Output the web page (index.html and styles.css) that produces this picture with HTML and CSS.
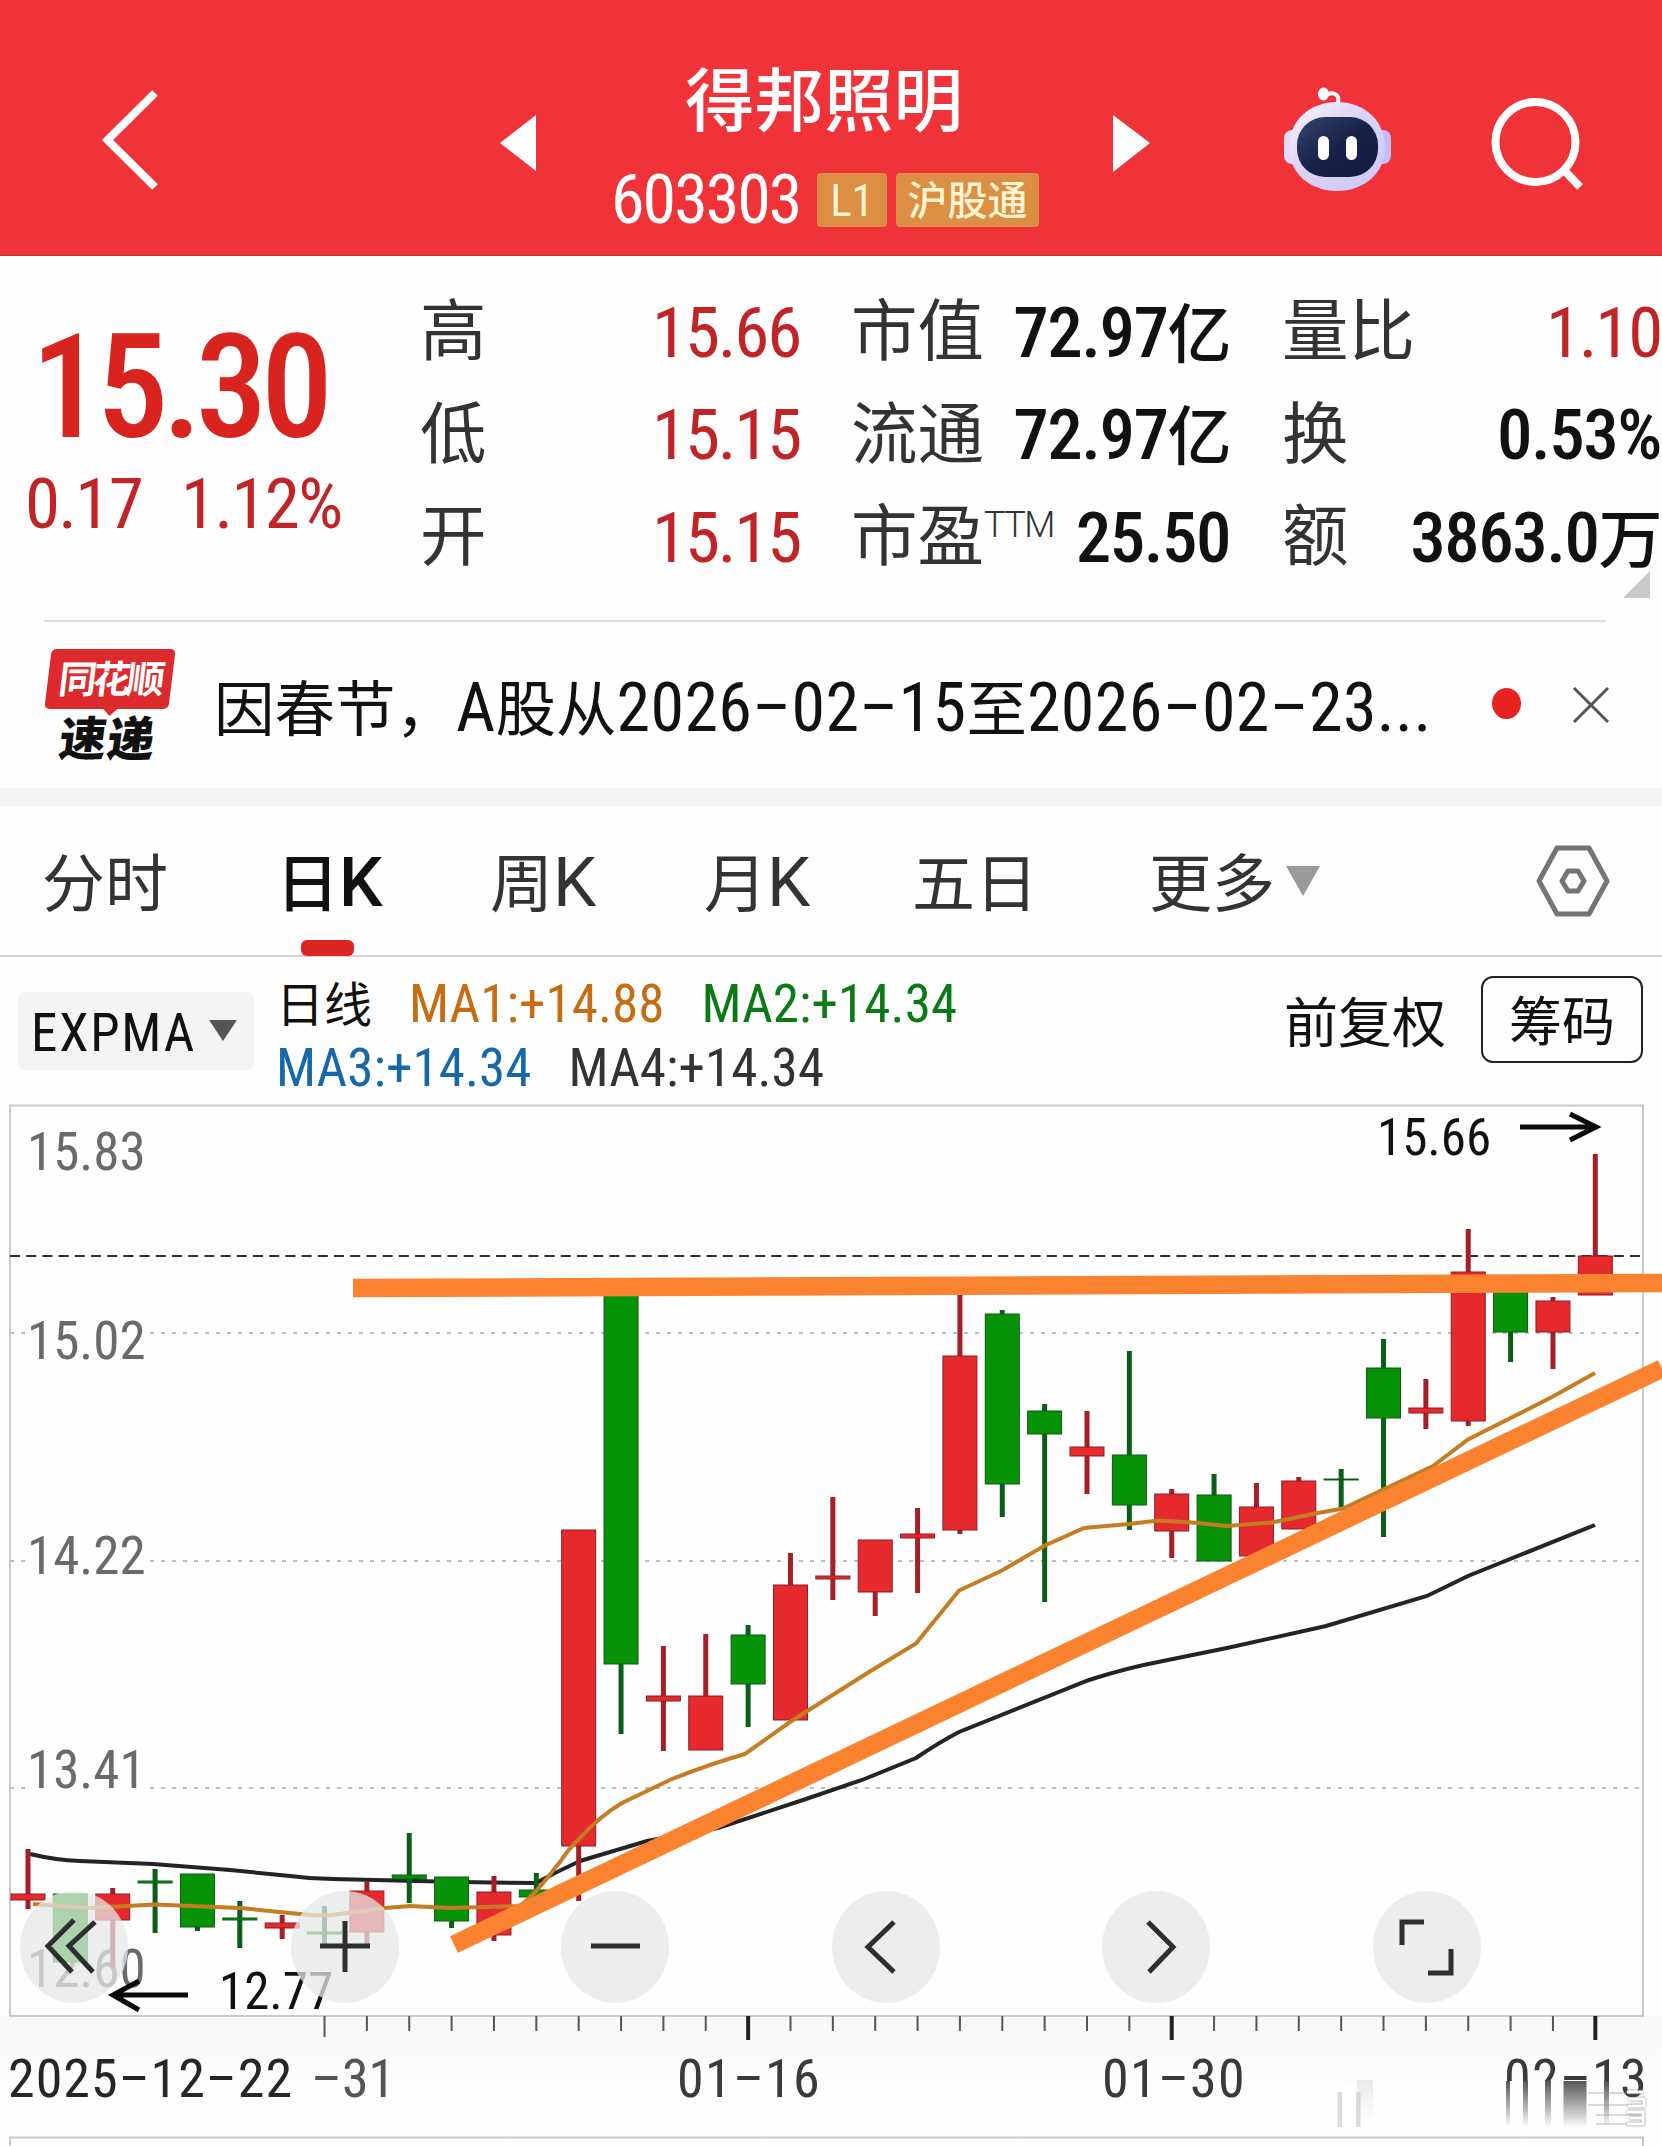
FILE: index.html
```html
<!DOCTYPE html>
<html lang="zh">
  <head>
    <meta charset="UTF-8" />
    <meta name="viewport" content="width=device-width, initial-scale=1.0" />
    <title>得邦照明 603303</title>
    <link rel="stylesheet" href="styles.css">
  </head>
  <body>
    <header class="cabecera">
      <svg class="volver" viewBox="98 86 64 110"><path d="M155 93 L107.500 140 L155 187" /></svg>
      <svg class="anterior" viewBox="500 115 37 57"><path d="M500 143 L536 115 V171 Z" /></svg>
      <div class="titulo">
        <h1>得邦照明</h1>
        <div class="codigo">
          <span class="num">603303</span>
          <span class="etiqueta nivel">L1</span>
          <span class="etiqueta">沪股通</span>
        </div>
      </div>
      <svg class="siguiente" viewBox="1113 115 37 57"><path d="M1113 115 L1150 143 L1113 172 Z" /></svg>
      <svg class="robot" viewBox="1280 84 115 112">
        <defs>
          <linearGradient id="casco" x1="0" y1="0" x2="1" y2="1">
            <stop offset="0" stop-color="#fbf4fb" />
            <stop offset=".45" stop-color="#ddd3f6" />
            <stop offset="1" stop-color="#c9c8f7" />
          </linearGradient>
          <linearGradient id="visor" x1="0" y1="0" x2="1" y2="1">
            <stop offset="0" stop-color="#34436e" />
            <stop offset=".5" stop-color="#17224a" />
            <stop offset="1" stop-color="#131c40" />
          </linearGradient>
        </defs>
        <path d="M1338 103 C1340 94 1333 91 1326 95" fill="none" stroke="#fff" stroke-width="4" />
        <ellipse cx="1323.500" cy="94" rx="5.500" ry="6.500" fill="#fff" />
        <rect x="1284" y="130" width="16" height="34" rx="8" fill="#e2dbfb" />
        <rect x="1375" y="130" width="16" height="34" rx="8" fill="#c3bff3" />
        <path d="M1337 102 C1365 102 1385 121 1385 148 C1385 173 1364 191 1337 191 C1310 191 1289 173 1289 148 C1289 121 1309 102 1337 102 Z" fill="url(#casco)" />
        <rect x="1297" y="117" width="81" height="60" rx="28" fill="url(#visor)" />
        <rect x="1318" y="136" width="11" height="24" rx="5.500" fill="#fff" />
        <rect x="1346" y="136" width="11" height="24" rx="5.500" fill="#fff" />
      </svg>
      <svg class="buscar" viewBox="1488 92 102 102">
        <circle cx="1535.500" cy="142" r="40" />
        <path d="M1563 169 L1580 187" />
      </svg>
    </header>

    <section class="cotizacion">
      <div class="precio">
        <strong class="num">15.30</strong>
        <div class="cambio num"><span>0.17</span><span>1.12%</span></div>
      </div>
      <dl class="datos datos1">
        <div><dt>高</dt><dd class="num rojo">15.66</dd></div>
        <div><dt>低</dt><dd class="num rojo">15.15</dd></div>
        <div><dt>开</dt><dd class="num rojo">15.15</dd></div>
      </dl>
      <dl class="datos datos2">
        <div><dt>市值</dt><dd class="num">72.97<span>亿</span></dd></div>
        <div><dt>流通</dt><dd class="num">72.97<span>亿</span></dd></div>
        <div><dt>市盈<sup>TTM</sup></dt><dd class="num">25.50</dd></div>
      </dl>
      <dl class="datos datos3">
        <div><dt>量比</dt><dd class="num rojo">1.10</dd></div>
        <div><dt>换</dt><dd class="num">0.53%</dd></div>
        <div><dt>额</dt><dd class="num">3863.0<span>万</span></dd></div>
      </dl>
      <i class="esquina"></i>
    </section>

    <section class="aviso">
      <div class="logo">
        <span class="logo-rojo"><b>同花顺</b></span>
        <span class="logo-negro">速递</span>
      </div>
      <p>因春节，<span class="num">A</span>股从<span class="num">2026–02–15</span>至<span class="num">2026–02–23...</span></p>
      <i class="punto"></i>
      <svg class="cerrar" viewBox="0 0 40 40"><path d="M3 3 L37 37 M37 3 L3 37" /></svg>
    </section>

    <nav class="pestanas">
      <a>分时</a>
      <a class="activa">日<span>K</span></a>
      <a>周<span>K</span></a>
      <a>月<span>K</span></a>
      <a>五日</a>
      <a class="mas">更多<svg viewBox="0 0 34 30"><path d="M0 0 H34 L17 30 Z" /></svg></a>
      <svg class="ajustes" viewBox="0 0 76 74">
        <path d="M22 4 H54 L72 37 L54 70 H22 L4 37 Z" />
        <path d="M33 27 H43 L49 37 L43 47 H33 L27 37 Z" />
      </svg>
    </nav>

    <section class="indicadores">
      <div class="selector">EXPMA<svg viewBox="0 0 28 21"><path d="M0 0 H28 L14 21 Z" /></svg></div>
      <div class="medias">
        <div><span class="linea">日线</span><span class="ma1">MA1:+14.88</span><span class="ma2">MA2:+14.34</span></div>
        <div><span class="ma3">MA3:+14.34</span><span class="ma4">MA4:+14.34</span></div>
      </div>
      <span class="ajuste">前复权</span>
      <span class="boton">筹码</span>
    </section>

    <section class="grafico">
      <svg class="lienzo" viewBox="0 1090 1662 1056">
        <defs>
          <linearGradient id="pie" x1="0" y1="0" x2="0" y2="1">
            <stop offset="0" stop-color="#f7f8f8" />
            <stop offset=".5" stop-color="#fcfdfd" />
            <stop offset="1" stop-color="#fdfefe" />
          </linearGradient>
          <linearGradient id="estela" x1="0" y1="0" x2="0" y2="1">
            <stop offset="0" stop-color="#555" />
            <stop offset="1" stop-color="#555" stop-opacity="0" />
          </linearGradient>
        </defs>
        <rect x="0" y="2016" width="1662" height="121" fill="url(#pie)" />
        <rect class="marco" x="10" y="1105.500" width="1633" height="910.500" />
        <path class="marco" d="M10 2146 V2137.500 H1643 V2146" />

        <!-- Niveles de precio -->
        <path class="nivel-precio" d="M10 1333 H32 M150 1333 H1643 M10 1561 H32 M150 1561 H1643 M10 1788 H32 M150 1788 H1643" />
        <path class="actual" d="M10 1256 H1640" />
        <g class="eje">
          <text x="27" y="1170">15.83</text>
          <text x="27" y="1359">15.02</text>
          <text x="27" y="1574">14.22</text>
          <text x="27" y="1788">13.41</text>
          <text x="27" y="1987">12.60</text>
        </g>

        <path class="negra" d="M30 1854 Q55 1860 80 1861 L153 1864 L230 1870 L290 1876 Q312 1879 333 1879 L459 1882 L536 1883 Q558 1871 580 1861 L647 1841 L718 1828 L806 1799 L862 1780 L916 1758 Q938 1743 959 1732 L1089 1680 Q1126 1668 1163 1661 L1227 1648 L1326 1626 L1427 1596 L1468 1576 L1595 1525" />
        <g id="velas"></g>
        <path class="naranja" d="M33 1904 L89 1908 L155 1904.500 L240 1908 L300 1914 Q325 1917 340 1914 L385 1908 L410 1906 L450 1908 L520 1906 C540 1890 548 1876 560 1862 Q570 1847 580 1838 Q600 1816 622 1803 L672 1779 Q710 1764 745 1754 L790 1722 L869 1672 L916 1643.500 L959 1590.500 L1001 1571 L1044 1546 L1084 1528 L1129 1524 L1158 1520.500 L1192 1522.500 L1227 1526 L1272 1522.500 L1315 1513.500 L1343 1508.500 L1433 1466 L1468 1439.500 L1552 1397 L1595 1373" />

        <!-- Tendencias dibujadas a mano -->
        <path class="tendencia" d="M353 1288 L1662 1283" />
        <path class="tendencia" d="M454 1944.500 L1662 1368.500" />

        <text class="extremo" x="1377" y="1155">15.66</text>
        <path class="flecha" d="M1520 1127 H1596 M1570 1114 L1596 1127 L1570 1140" />
        <text class="extremo" x="219" y="2009">12.77</text>
        <path class="flecha" d="M188 1995 H113 M139 1981 L113 1995 L139 2010" />

        <g id="marcas"></g>
        <g class="fechas">
          <text class="primera" x="8" y="2097">2025–12–22</text>
          <text class="tapada" x="311" y="2097">–31</text>
          <text x="677" y="2097">01–16</text>
          <text x="1102" y="2097">01–30</text>
          <text x="1504" y="2097">02–13</text>
        </g>

        <!-- Restos de la marca de agua -->
        <rect x="1498" y="2081" width="120" height="50" fill="#fcfdfd" />
        <g fill="url(#estela)">
          <rect x="1506" y="2081" width="4" height="46" />
          <rect x="1523" y="2081" width="5" height="46" />
          <rect x="1545" y="2081" width="6" height="46" />
          <rect x="1563.500" y="2081" width="23" height="46" />
          <rect x="1604" y="2081" width="5" height="46" />
          <rect x="1357" y="2080" width="16" height="40" opacity=".12" />
        </g>
        <path d="M1340 2127 V2092 M1358 2127 V2092" stroke="#bbb" stroke-opacity=".5" stroke-width="5" />
        <rect x="1342" y="2084" width="14" height="44" fill="#fff" />
        <path d="M1588 2093 H1640 M1588 2105 H1640 M1596 2115 H1640 M1596 2124 H1636" stroke="#999" stroke-opacity=".35" stroke-width="2" />
        <path class="sello" d="M1627 2092 H1643 M1629 2099 H1644 V2106 H1628 M1627 2112 H1643 V2124 H1627 M1630 2118 H1642" />
      </svg>

      <div class="botones">
        <button><svg viewBox="0 0 108 112"><path d="M54 29 L28 55 L52 81 M75 31 L49 55 L73 81" /></svg></button>
        <button><svg viewBox="0 0 108 112"><path d="M29 55 H79 M54 30 V81" /></svg></button>
        <button><svg viewBox="0 0 108 112"><path d="M30 55 H79" /></svg></button>
        <button><svg viewBox="0 0 108 112"><path d="M62 31 L36 56 L62 81" /></svg></button>
        <button><svg viewBox="0 0 108 112"><path d="M46 31 L71 56 L47 81" /></svg></button>
        <button><svg viewBox="0 0 108 112"><path d="M29 54 V31 H51 M78 58 V82 H55" /></svg></button>
      </div>
    </section>
    <script src="velas.js"></script>
  </body>
</html>
```
FILE: styles.css
```css
* {
  box-sizing: border-box;
}
body {
  margin: 0;
  width: 1662px;
  height: 2146px;
  overflow: hidden;
  background-color: #fefefe;
  color: #111;
  font-family: "Noto Sans CJK SC", sans-serif;
}
svg {
  display: block;
}
/* Las cifras van siempre en una fuente estrecha */
.num {
  font-family: "Roboto Condensed", Roboto, sans-serif;
}
.rojo {
  color: #c12426;
}

/* Cabecera roja */
.cabecera {
  display: flex;
  align-items: flex-start;
  height: 256px;
  background-color: #f03239;
  border-bottom: 1px solid #b5393d;
  color: white;
}
.cabecera svg {
  flex: none;
}
.volver {
  width: 64px;
  height: 110px;
  margin: 86px 0 0 98px;
}
.volver path,
.buscar circle,
.buscar path {
  fill: none;
  stroke: white;
  stroke-width: 8px;
}
.anterior,
.siguiente {
  width: 37px;
  height: 57px;
  margin-top: 115px;
  fill: white;
}
.anterior {
  margin-left: 338px;
}
.siguiente {
  margin-left: 73px;
}
.titulo {
  width: 430px;
  margin: 56px 0 0 73px;
}
.titulo h1 {
  margin: 0 0 37px;
  padding-right: 2px;
  font-size: 69.5px;
  line-height: 80px;
  font-weight: 500;
  text-align: center;
}
.codigo {
  display: flex;
  align-items: center;
  height: 54px;
}
.codigo .num {
  width: 207px;
  padding-left: 1px;
  font-size: 68px;
  font-weight: 450;
  letter-spacing: -2px;
}
.etiqueta {
  width: 143px;
  height: 54px;
  border-radius: 4px;
  background-color: #dc8e42;
  color: #fff4d2;
  font-size: 40px;
  font-weight: 500;
  line-height: 50px;
  text-align: center;
}
.etiqueta.nivel {
  width: 70px;
  margin-right: 9px;
  font-family: "Roboto Condensed", Roboto, sans-serif;
  font-size: 45px;
  font-weight: 400;
  line-height: 55px;
}
.robot {
  width: 115px;
  height: 112px;
  margin: 84px 0 0 130px;
}
.buscar {
  width: 102px;
  height: 102px;
  margin: 92px 0 0 93px;
}

/* Precio y datos del día */
.cotizacion {
  position: relative;
  display: flex;
  height: 366px;
  padding-top: 23px;
}
.cotizacion::after {
  content: "";
  position: absolute;
  left: 44px;
  right: 56px;
  bottom: 0;
  border-bottom: 2px solid #dfdfdf;
}
.precio {
  width: 422px;
  padding: 39px 0 0 31px;
  color: #d8231f;
}
.precio strong {
  display: block;
  font-size: 144px;
  line-height: 140px;
  font-weight: 500;
  letter-spacing: -6.5px;
}
.cambio {
  display: flex;
  gap: 39px;
  margin: 4px 0 0 -6px;
  font-size: 71px;
  line-height: 84px;
  font-weight: 450;
  letter-spacing: -1.7px;
  color: #c12426;
}
.datos {
  margin: 0;
}
.datos1 {
  width: 378px;
}
.datos2 {
  width: 377px;
  margin-left: 53px;
}
.datos3 {
  width: 377px;
  margin-left: 54px;
}
.datos div {
  display: flex;
  justify-content: space-between;
  align-items: center;
  height: 102.5px;
  white-space: nowrap;
}
.datos dt {
  margin: -8px 0 0 -2px;
  font-size: 66.5px;
  line-height: 90px;
  color: #333;
}
.datos dd {
  margin: 5px 0 0;
  font-size: 71px;
  line-height: 80px;
  letter-spacing: -1.5px;
  font-weight: 500;
}
.datos dd.rojo {
  font-weight: 450;
  letter-spacing: -2.2px;
}
.datos dd span {
  font-family: "Noto Sans CJK SC", sans-serif;
  font-size: 64px;
  line-height: 1;
  font-weight: 500;
}
.datos sup {
  font-family: Roboto, sans-serif;
  font-size: 36px;
  font-weight: 300;
  line-height: 0;
  letter-spacing: -1.5px;
  vertical-align: 23px;
}
.esquina {
  position: absolute;
  right: 12px;
  top: 315px;
  border-left: 27px solid transparent;
  border-bottom: 27px solid #c9c9c9;
}

/* Aviso */
.aviso {
  display: flex;
  align-items: center;
  height: 184px;
  border-bottom: 18px solid #f2f4f5;
}
.logo {
  width: 124px;
  margin: 0 42px 0 48px;
  padding-top: 2px;
  font-weight: 900;
  line-height: 1;
}
.logo span {
  display: block;
}
.logo-rojo {
  position: relative;
  height: 60px;
  border-radius: 5px;
  background-color: #dc2a2d;
  color: white;
  font-size: 38px;
  line-height: 56px;
  text-align: center;
  transform: skewX(-7deg);
}
.logo-rojo b {
  display: inline-block;
  font-weight: 700;
  letter-spacing: -4px;
}
.logo-rojo::after {
  content: "";
  position: absolute;
  left: 58px;
  top: 59px;
  border: 8px solid transparent;
  border-top-color: #dc2a2d;
  border-bottom: 0;
}
.logo-negro {
  padding-left: 12px;
  font-size: 47px;
  line-height: 54px;
  letter-spacing: 1px;
  transform: skewX(-7deg);
}
.aviso p {
  width: 1278px;
  margin: 0;
  font-size: 60.5px;
  line-height: 90px;
  white-space: nowrap;
}
.aviso p .num {
  font-size: 68px;
  line-height: 1;
  letter-spacing: 0.35px;
}
.punto {
  width: 29px;
  height: 31px;
  margin-top: -3px;
  border-radius: 50%;
  background-color: #e8221e;
}
.cerrar {
  width: 40px;
  height: 40px;
  margin-left: 50px;
  fill: none;
  stroke: #555;
  stroke-width: 3px;
}

/* Pestañas */
.pestanas {
  display: flex;
  align-items: center;
  height: 151px;
  padding-left: 42px;
  border-bottom: 2px solid #d2d2d2;
  font-size: 63px;
  line-height: 144px;
  color: #333;
}
.pestanas a {
  position: relative;
  flex: none;
  width: 214px;
  margin-top: -3px;
}
.pestanas a:first-child {
  width: 234px;
}
.pestanas a:nth-child(4) {
  width: 208px;
}
.pestanas a:nth-child(5) {
  width: 237px;
}
.pestanas a span {
  font-family: Roboto, sans-serif;
  font-size: 69px;
  line-height: 1;
}
.pestanas .activa {
  font-weight: 500;
  color: #111;
}
.pestanas .activa::after {
  content: "";
  position: absolute;
  left: 25px;
  bottom: -5px;
  width: 53px;
  height: 16px;
  border-radius: 6px;
  background-color: #dc2522;
}
.pestanas .mas {
  display: flex;
  align-items: center;
  gap: 11px;
  width: 386px;
}
.mas svg {
  width: 34px;
  height: 30px;
  margin-top: 4px;
  fill: #9a9a9a;
}
.ajustes {
  width: 76px;
  height: 74px;
  fill: none;
  stroke: #747474;
  stroke-width: 5px;
  stroke-linejoin: round;
}

/* Fila de indicadores */
.indicadores {
  display: flex;
  align-items: flex-start;
  height: 133px;
  padding-left: 18px;
  color: #111;
}
.selector {
  display: flex;
  align-items: center;
  gap: 13px;
  width: 236px;
  height: 78px;
  margin-top: 35px;
  padding: 4px 0 0 13px;
  border-radius: 8px;
  background-color: #f3f4f4;
  font-family: "Roboto Condensed", Roboto, sans-serif;
  font-size: 53px;
  letter-spacing: 1.8px;
}
.selector svg {
  width: 28px;
  height: 21px;
  margin-top: -6px;
  fill: #555;
}
.medias {
  width: 1008px;
  margin: 15px 0 0 22px;
  font-family: "Roboto Condensed", Roboto, sans-serif;
  font-size: 53px;
  letter-spacing: 0.1px;
}
.medias div {
  display: flex;
  align-items: center;
  gap: 37px;
  height: 64px;
}
.medias .linea {
  margin-top: -6px;
  font-family: "Noto Sans CJK SC", sans-serif;
  font-size: 48px;
  letter-spacing: 0;
}
.ma1 {
  color: #c66c12;
}
.ma2 {
  color: #0b7a14;
}
.ma3 {
  color: #1668a8;
}
.ma4 {
  color: #333;
}
.ajuste {
  width: 197px;
  margin-top: 20px;
  font-size: 54px;
  line-height: 86px;
}
.boton {
  width: 162px;
  height: 87px;
  margin-top: 19px;
  border: 2px solid #222;
  border-radius: 12px;
  font-size: 53px;
  line-height: 80px;
  text-align: center;
}

/* Gráfico de velas */
.grafico {
  position: relative;
  height: 1056px;
}
.lienzo {
  width: 1662px;
  height: 1056px;
  font-family: "Roboto Condensed", Roboto, sans-serif;
}
.marco {
  fill: none;
  stroke: #c9caca;
  stroke-width: 2px;
}
.nivel-precio {
  stroke: #bdbdbd;
  stroke-width: 2px;
  stroke-dasharray: 4 7;
}
.actual {
  stroke: #33331c;
  stroke-width: 2px;
  stroke-dasharray: 10 6.2;
}
.eje text {
  font-size: 53px;
  fill: #6a6a6a;
}
.vela-roja {
  fill: #e6292d;
  stroke: #8f1c22;
}
.vela-verde {
  fill: #079307;
  stroke: #0a5a12;
}
.mecha-roja {
  stroke: #a51f27;
  stroke-width: 5px;
}
.mecha-verde {
  stroke: #0a5f18;
  stroke-width: 5px;
}
.negra,
.naranja,
.tendencia,
.flecha {
  fill: none;
}
.negra {
  stroke: #222426;
  stroke-width: 4px;
}
.naranja {
  stroke: #c67c22;
  stroke-width: 4px;
}
.tendencia {
  stroke: #fb8330;
  stroke-width: 18.5px;
}
.extremo {
  font-size: 51px;
  fill: #111;
}
.flecha {
  stroke: #0a0a0a;
  stroke-width: 5px;
}
.marca {
  stroke: #555;
  stroke-width: 2px;
}
.marca-larga {
  stroke: #222;
  stroke-width: 4px;
}
.fechas text {
  font-size: 54px;
  letter-spacing: 1.3px;
  fill: #3a3a3a;
}
.fechas .primera {
  font-weight: 450;
  letter-spacing: 1px;
  fill: #262626;
}
.fechas .tapada {
  letter-spacing: 0;
  fill: #555;
}
.sello {
  fill: none;
  stroke: white;
  stroke-width: 3px;
  filter: drop-shadow(0 0 1px #777);
}

/* Botones flotantes sobre el gráfico */
.botones {
  position: absolute;
  left: 20px;
  top: 801px;
  display: flex;
  gap: 162.5px;
}
.botones button {
  width: 108px;
  height: 112px;
  padding: 0;
  border: 0;
  border-radius: 50%;
  background-color: rgba(230, 231, 231, 0.75);
}
.botones path {
  fill: none;
  stroke: #2d2f2f;
  stroke-width: 5px;
}
```
FILE: velas.js
```js
// color, apertura/cierre (arriba, abajo) y mecha (arriba, abajo)
const velas = [
  ["r", 1894, 1900, 1849, 1909],
  ["v", 1894, 1962, 1894, 1962],
  ["r", 1894, 1920, 1888, 1967],
  ["v", 1881, 1883, 1869, 1933],
  ["v", 1874, 1927, 1874, 1931],
  ["v", 1918, 1920, 1901, 1948],
  ["r", 1923, 1928, 1915, 1939],
  ["v", 1932, 1934, 1906, 1945],
  ["r", 1891, 1932, 1882, 1945],
  ["v", 1875, 1879, 1833, 1903],
  ["v", 1877, 1921, 1877, 1928],
  ["r", 1892, 1935, 1876, 1941],
  ["v", 1890, 1897, 1873, 1900],
  ["r", 1530, 1846, 1530, 1901],
  ["v", 1290, 1664, 1290, 1734],
  ["r", 1696, 1701, 1646, 1751],
  ["r", 1696, 1750, 1634, 1750],
  ["v", 1635, 1684, 1625, 1727],
  ["r", 1585, 1720, 1553, 1720],
  ["r", 1576, 1579, 1497, 1600],
  ["r", 1540, 1592, 1540, 1616],
  ["r", 1534, 1538, 1508, 1593],
  ["r", 1356, 1530, 1290, 1534],
  ["v", 1314, 1484, 1310, 1517],
  ["v", 1411, 1434, 1404, 1602],
  ["r", 1447, 1456, 1411, 1494],
  ["v", 1455, 1505, 1351, 1530],
  ["r", 1494, 1531, 1489, 1558],
  ["v", 1495, 1561, 1474, 1561],
  ["r", 1507, 1556, 1483, 1566],
  ["r", 1481, 1529, 1477, 1529],
  ["v", 1479, 1480, 1469, 1510],
  ["v", 1368, 1418, 1339, 1537],
  ["r", 1408, 1413, 1379, 1429],
  ["r", 1272, 1421, 1229, 1426],
  ["v", 1285, 1332, 1285, 1362],
  ["r", 1301, 1332, 1297, 1369],
  ["r", 1256, 1295, 1154, 1295]
];
const paso = 42.36;
let dibujo = "";
let marcas = "";
velas.forEach(([color, arriba, abajo, alto, bajo], i) => {
  const x = 28 + i * paso;
  const tipo = color == "r" ? "roja" : "verde";
  dibujo += `<path class="mecha-${tipo}" d="M${x} ${alto} V${bajo}" />`;
  dibujo += `<rect class="vela-${tipo}" x="${x - 17}" y="${arriba}" width="34" height="${abajo - arriba}" />`;
  // Las marcas de fecha empiezan en la octava vela
  if (i >= 7) {
    const larga = i % 10 == 7 && i > 7;
    marcas += `<path class="${larga ? "marca-larga" : "marca"}" d="M${x} 2016 V${larga ? 2040 : i == 7 ? 2037 : 2031}" />`;
  }
});
document.getElementById("velas").innerHTML = dibujo;
document.getElementById("marcas").innerHTML = marcas;
```
